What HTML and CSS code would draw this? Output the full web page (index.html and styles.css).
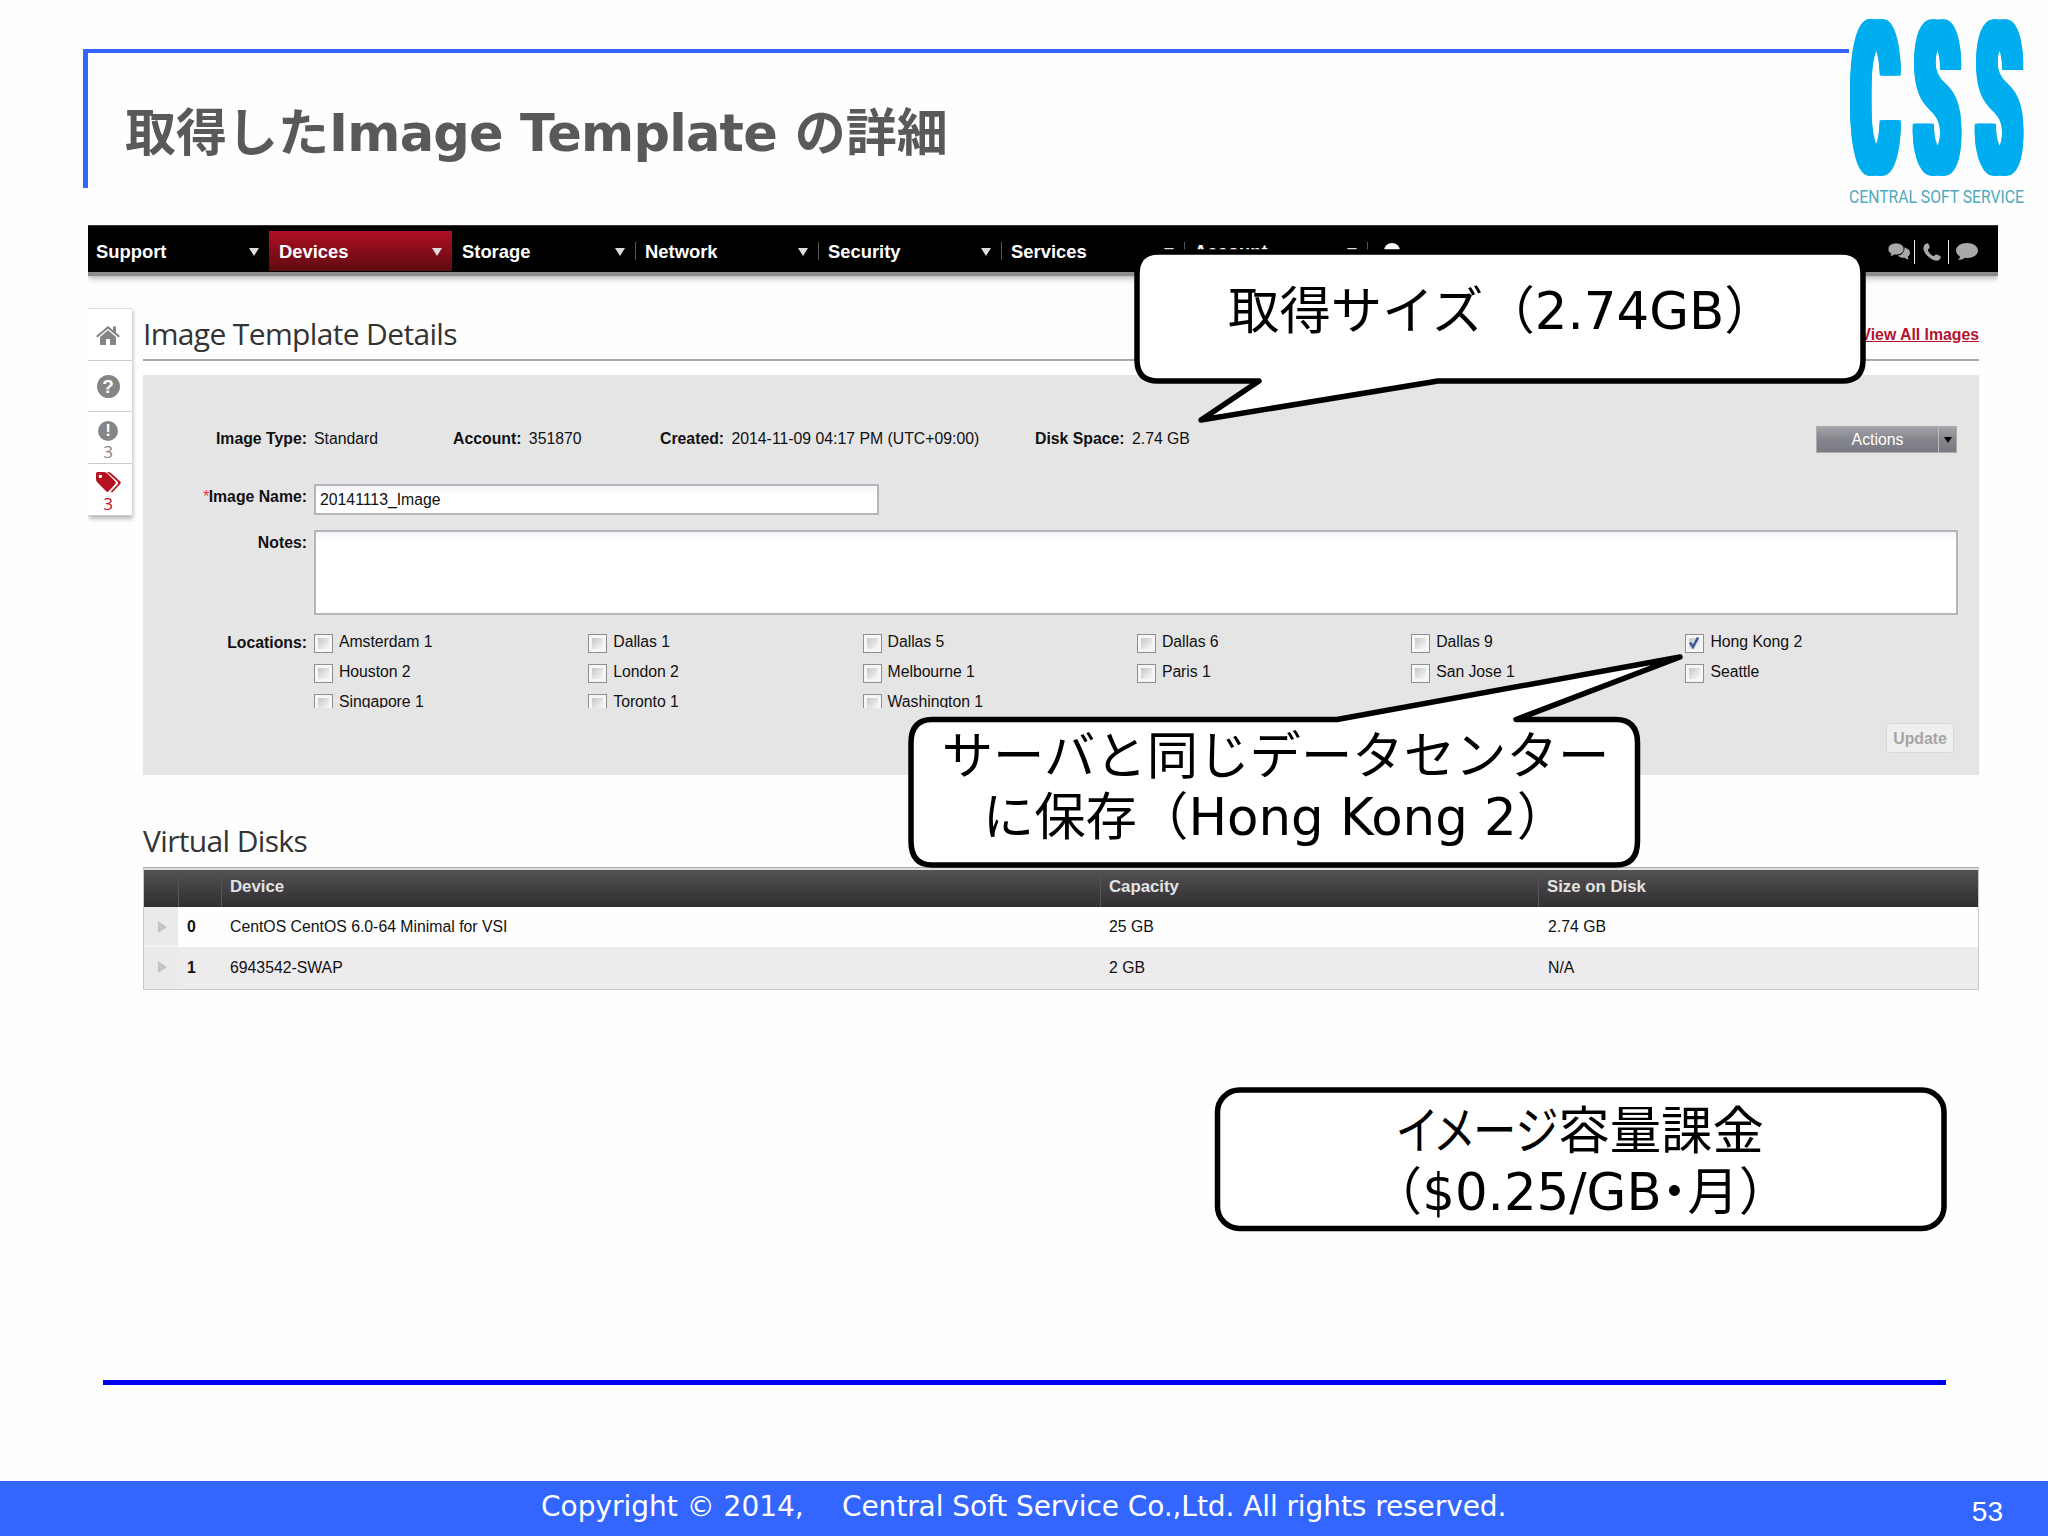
FILE: index.html
```html
<!DOCTYPE html>
<html lang="ja">
<head>
    <meta charset="UTF-8">
    <meta name="viewport" content="width=device-width, initial-scale=1.0">
    <title>取得したImage Template の詳細</title>
    <link rel="stylesheet" href="styles.css">
</head>
<body>
    <div class="slide">
        <header class="title-bar">
            <h1>取得した<span class="latin">Image Template</span> の詳細</h1>
        </header>

        <div class="logo">
            <div class="logo-letters"><span>C</span><span>S</span><span>S</span></div>
            <svg class="logo-caption" width="175" height="16" viewBox="0 0 175 16">
                <text x="0" y="14" textLength="175" lengthAdjust="spacingAndGlyphs">CENTRAL SOFT SERVICE</text>
            </svg>
        </div>

        <div class="console">
            <nav class="nav">
                <div class="nav-item first">Support<i class="arrow"></i></div>
                <div class="nav-item active">Devices<i class="arrow"></i></div>
                <div class="nav-item">Storage<i class="arrow"></i></div>
                <div class="nav-item sep">Network<i class="arrow"></i></div>
                <div class="nav-item sep">Security<i class="arrow"></i></div>
                <div class="nav-item sep">Services<i class="arrow"></i></div>
                <div class="nav-item sep">Account<i class="arrow"></i></div>
                <div class="nav-search sep">
                    <svg width="20" height="20" viewBox="0 0 20 20"><circle cx="9" cy="10" r="8" fill="#fff"/></svg>
                </div>
                <div class="nav-tools">
                    <svg width="22" height="20" viewBox="0 0 22 20" fill="#a9a9a9">
                        <path d="M15 5.500c4 0 7 2.300 7 5.300 0 1.800-1 3-2.300 4 .1 1.300.6 2 1.300 2.700-2 0-3.300-.7-4.300-1.700-3 .3-5.500-.5-6.700-2.300 4-.5 6.500-3 5-8z"/>
                        <path d="M8 1c4.400 0 8 2.500 8 6s-3.600 6-8 6c-.6 0-1.300 0-1.900-.2C5 14 3.500 14.500 1.600 14.500c.8-.7 1.200-1.500 1.300-2.700C1 10.700 0 9 0 7c0-3.500 3.600-6 8-6z" stroke="#000" stroke-width=".8"/>
                    </svg>
                    <svg class="phone" width="18" height="18" viewBox="0 0 18 18" fill="#a9a9a9">
                        <path d="M1.500 2C2.500.8 4 0 5 .4c1 .8 1.800 3 1.600 4.400C6.300 5.800 5 6 4.800 7c.7 2.500 3 5 5.500 6 1.200.2 1.700-1.200 2.700-1.500 1.500-.1 4 1.200 4.700 2.300.5 1-.6 2.600-2 3.400-2 1-5 .4-8-1.600C4 13 1.200 9.500.5 6.500.2 4.500.6 3 1.500 2z"/>
                    </svg>
                    <svg class="comment" width="22" height="20" viewBox="0 0 22 20" fill="#a9a9a9">
                        <path d="M11 1c6 0 11 3 11 7.500S17 16 11 16c-.8 0-1.500 0-2.200-.2C7 17.300 5 18 2 18c1.200-1 1.800-2 2-3.600C1.500 13 0 11 0 8.500 0 4 5 1 11 1z"/>
                    </svg>
                </div>
            </nav>

            <div class="content">
                <aside class="sidebar">
                    <div class="side-item">
                        <svg width="24" height="22" viewBox="0 0 24 22" fill="#858585">
                            <path d="M12 2L0 12l1.300 1.600L12 4.800l10.700 8.800L24 12l-4-3.400V2.500h-3v3.600z"/>
                            <path d="M12 6.300L4 13v8h6v-6h4v6h6v-8z"/>
                        </svg>
                    </div>
                    <div class="side-item"><span class="badge">?</span></div>
                    <div class="side-item stacked"><span class="badge small">!</span><span class="count">3</span></div>
                    <div class="side-item stacked red">
                        <svg width="25" height="21" viewBox="0 0 25 21" fill="#b5121f">
                            <path fill-rule="evenodd" d="M0 1.500Q0 0 1.500 0H8q2 0 3.500 1.500l7.800 8q1 1.200 0 2.400l-6.600 7.300q-1.200 1.200-2.500 0L1.500 10.500Q0 9 0 7zM4.300 2.700a1.700 1.700 0 1 0 .1 0z"/>
                            <path d="M11 0h1.500q1.500 0 3 1.500l8.700 8q1.200 1.200 0 2.400L17 19.700q-1.200 1-2.500.3l7-7.500q1.300-1.500 0-3z"/>
                        </svg>
                        <span class="count">3</span>
                    </div>
                </aside>

                <main class="main">
                    <div class="heading">
                        <h2>Image Template Details</h2>
                        <a class="view-all" href="#">View All Images</a>
                    </div>

                    <form class="panel">
                        <div class="info-row">
                            <b class="label">Image Type:</b>
                            <span>Standard</span>
                            <span><b>Account:</b> 351870</span>
                            <span><b>Created:</b> 2014-11-09 04:17 PM (UTC+09:00)</span>
                            <span><b>Disk Space:</b> 2.74 GB</span>
                            <div class="actions"><span class="actions-text">Actions</span><span class="actions-drop"></span></div>
                        </div>
                        <div class="row name-row">
                            <b class="label"><em>*</em>Image Name:</b>
                            <div class="field name-field">20141113_Image</div>
                        </div>
                        <div class="row notes-row">
                            <b class="label">Notes:</b>
                            <div class="field notes-field"></div>
                        </div>
                        <div class="row loc-row">
                            <b class="label">Locations:</b>
                            <div class="locations">
                                <label><i class="box"></i>Amsterdam 1</label>
                                <label><i class="box"></i>Dallas 1</label>
                                <label><i class="box"></i>Dallas 5</label>
                                <label><i class="box"></i>Dallas 6</label>
                                <label><i class="box"></i>Dallas 9</label>
                                <label><i class="box"><svg width="14" height="14" viewBox="0 0 14 14"><path d="M3 6.500l3 4.500 5-9.500" fill="none" stroke="#41599c" stroke-width="2.600"/></svg></i>Hong Kong 2</label>
                                <label><i class="box"></i>Houston 2</label>
                                <label><i class="box"></i>London 2</label>
                                <label><i class="box"></i>Melbourne 1</label>
                                <label><i class="box"></i>Paris 1</label>
                                <label><i class="box"></i>San Jose 1</label>
                                <label><i class="box"></i>Seattle</label>
                                <label><i class="box"></i>Singapore 1</label>
                                <label><i class="box"></i>Toronto 1</label>
                                <label><i class="box"></i>Washington 1</label>
                            </div>
                        </div>
                        <div class="update">Update</div>
                    </form>

                    <h2 class="disks-title">Virtual Disks</h2>
                    <div class="table">
                        <div class="tr th"><span></span><span></span><span>Device</span><span>Capacity</span><span>Size on Disk</span></div>
                        <div class="tr"><span class="expand"></span><b>0</b><span>CentOS CentOS 6.0-64 Minimal for VSI</span><span>25 GB</span><span>2.74 GB</span></div>
                        <div class="tr alt"><span class="expand"></span><b>1</b><span>6943542-SWAP</span><span>2 GB</span><span>N/A</span></div>
                    </div>
                </main>
            </div>
        </div>

        <div class="rule"></div>

        <footer class="footer">
            <span class="copy">Copyright © 2014,</span>
            <span class="company">Central Soft Service Co.,Ltd. All rights reserved.</span>
            <span class="page">53</span>
        </footer>

        <!-- speech balloons on top of the console -->
        <svg class="balloons" width="2048" height="1536" viewBox="0 0 2048 1536">
            <g fill="#fff" stroke="#000" stroke-width="5.500" stroke-linejoin="round">
                <path d="M1158 252H1842Q1863 252 1863 274V360Q1863 381 1842 381H1438L1201 420L1259 381H1158Q1137 381 1137 360V274Q1137 252 1158 252Z"/>
                <path d="M932 719.500H1337L1680 657L1516 719.500H1616Q1637.500 719.500 1637.500 743V841Q1637.500 865 1616 865H932Q911 865 911 841V743Q911 719.500 932 719.500Z"/>
                <rect x="1217.500" y="1090" width="726.500" height="138.500" rx="22"/>
            </g>
        </svg>
        <div class="balloon-text size-note">取得サイズ（2.74GB）</div>
        <div class="balloon-text place-note">サーバと同じデータセンター<br>に保存（Hong Kong 2）</div>
        <div class="balloon-text price-note"><span class="kana narrow">イメージ</span>容量課金<br><span class="paren">（</span>$0.25/GB<span class="kana">・</span>月<span class="paren">）</span></div>
    </div>
</body>
</html>
```
FILE: styles.css
```css
:root {
    --blue: #3366ff;
    --red: #b5121f;
    --ui: "Liberation Sans", Arial, sans-serif;
    --jp: "DejaVu Sans", "Noto Sans CJK JP", sans-serif;
}
* {
    box-sizing: border-box;
}
body {
    margin: 0;
    background: #fff;
}
h1, h2 {
    margin: 0;
}
.slide {
    position: relative;
    width: 2048px;
    height: 1536px;
    overflow: hidden;
    background: #fefefe;
    padding-top: 49px;
}
.title-bar {
    width: 1766px;
    height: 139px;
    margin-left: 83px;
    padding: 51px 0 0 37px;
    border-top: 4px solid var(--blue);
    border-left: 5px solid var(--blue);
}
.title-bar h1 {
    font: bold 51px/60px var(--jp);
    color: #595959;
    white-space: nowrap;
}
.title-bar .latin {
    letter-spacing: -.75px;
}

/* logo */
.logo {
    position: absolute;
    left: 1849px;
    top: 19px;
    width: 175px;
    height: 187px;
}
.logo-letters {
    display: flex;
    gap: 10px;
    width: 175px;
    height: 157px;
}
.logo-letters span {
    display: flex;
    flex: none;
    justify-content: center;
    width: 52px;
    font: 500 206px/163px Roboto, sans-serif;
    color: #00aeef;
    transform: scaleX(.325);
    text-shadow: 7px 3px, 14px 3px, 20px 3px, -7px 3px, -14px 3px, -20px 3px,
        7px -3px, 14px -3px, 20px -3px, -7px -3px, -14px -3px, -20px -3px,
        20px 0, -20px 0;
}
.logo-caption {
    display: block;
    margin-top: 13px;
    font: 400 18px Roboto, sans-serif;
    fill: #4fa9bd;
}

/* console */
.console {
    width: 1910px;
    margin: 37px 0 0 88px;
    font: 15.8px/20px var(--ui);
    color: #111;
}
.nav {
    display: flex;
    height: 47px;
    background: #000;
    border-top: 1px solid #333;
    box-shadow: 0 4px 0 #8c8c8c, 0 6px 6px #aaa;
    clip-path: inset(0 0 -20px 0);
    font-weight: bold;
    font-size: 18.4px;
    color: #fff;
}
.nav-item {
    display: flex;
    align-items: center;
    justify-content: space-between;
    width: 183px;
    height: 40px;
    margin-top: 5px;
    padding: 2px 10px 0 10px;
}
.nav-item.first {
    width: 181px;
    padding-left: 8px;
}
.nav-item.active {
    background: linear-gradient(#b01023, #5e0a10);
}
.sep {
    background: linear-gradient(#555, #555) 0 50% / 1px 18px no-repeat;
}
.arrow {
    border: 5px solid transparent;
    border-top: 8px solid #ddd;
    border-bottom: 0;
}
.nav-search {
    width: 40px;
    height: 40px;
    margin-top: 5px;
    padding: 10px 0 0 16px;
}
.nav-tools {
    display: flex;
    align-items: center;
    margin: 6px 20px 0 auto;
    height: 40px;
}
.nav-tools .phone {
    box-sizing: content-box;
    padding: 3px 7px 3px 8px;
    margin: 0 7px 0 4px;
    border-left: 1px solid #eee;
    border-right: 1px solid #eee;
}
.content {
    display: flex;
    gap: 11px;
    padding-top: 36px;
}
.sidebar {
    width: 44px;
    height: 208px;
    border-top: 1px solid #ddd;
    box-shadow: 1px 3px 4px #bbb;
    clip-path: inset(-2px -6px -8px 0);
    background: #fff;
}
.side-item {
    display: flex;
    align-items: center;
    justify-content: center;
    height: 51.7px;
    padding: 1px 4px 0 0;
    border-bottom: 1px solid #ccc;
    color: #858585;
}
.side-item.stacked {
    flex-direction: column;
    padding-top: 8px;
}
.side-item.red {
    color: var(--red);
}
.badge {
    width: 23px;
    height: 23px;
    border-radius: 50%;
    background: #858585;
    color: #fff;
    text-align: center;
    font: bold 19px/23px var(--ui);
}
.badge.small {
    width: 20px;
    height: 20px;
    line-height: 20px;
    font-size: 17px;
}
.count {
    font: 17px/21px "Open Sans", sans-serif;
}
.main {
    width: 1836px;
}
.heading {
    display: flex;
    justify-content: space-between;
    height: 53px;
    border-bottom: 2px solid #aaabb0;
}
.main h2 {
    font: 400 30px/52px "Open Sans", sans-serif;
    letter-spacing: -.65px;
    color: #333;
}
.view-all {
    font: bold 15.8px/53px var(--ui);
    color: #b5122b;
}
.panel {
    height: 400px;
    margin-top: 14px;
    padding-top: 51px;
    background: #e6e5e6;
}
.label {
    text-align: right;
}
.label em {
    color: #e33;
    font-weight: normal;
}
.info-row {
    display: grid;
    grid-template-columns: 164px 132px 200px 368px 1fr 141px;
    column-gap: 7px;
    height: 27px;
    padding-right: 22px;
    line-height: 25px;
    white-space: nowrap;
}
.info-row b {
    margin-right: 3px;
}
.info-row .label {
    margin-right: 0;
}
.actions {
    display: flex;
    height: 27px;
    border: 1px solid #aaa;
    background: linear-gradient(#a3a4a8, #85868c 50%, #797a82);
    color: #fff;
    text-align: center;
}
.actions-text {
    flex: 1;
    line-height: 26px;
}
.actions-drop {
    display: flex;
    align-items: center;
    justify-content: center;
    width: 18px;
    border-left: 1px solid #bbb;
}
.actions-drop::before {
    content: "";
    border: 4px solid transparent;
    border-top: 6px solid #000;
    border-bottom: 0;
}
.row {
    display: grid;
    grid-template-columns: 164px 1fr;
    column-gap: 7px;
    padding-right: 21px;
    line-height: 25px;
}
.field {
    border: 2px solid #b5b5bb;
    background: linear-gradient(#f4f4f8, #fff 10px);
}
.name-row {
    margin-top: 31px;
}
.name-field {
    width: 565px;
    height: 31px;
    padding-left: 4px;
    line-height: 28px;
}
.notes-row {
    margin-top: 15px;
}
.notes-field {
    height: 85px;
}
.loc-row {
    margin-top: 19px;
    line-height: 17px;
}
.locations {
    display: grid;
    grid-template-columns: repeat(6, 274.3px);
    grid-auto-rows: 29.8px;
    height: 74px;
    overflow: hidden;
}
.locations label {
    display: flex;
    gap: 6px;
    line-height: 15px;
    letter-spacing: -.05px;
}
.box {
    width: 19px;
    height: 19px;
    border: 1px solid #8e8f8f;
    background: linear-gradient(135deg, #c4c6c8, #fafafa) 50% / 11px 11px no-repeat #f6f6f6;
}
.box svg {
    display: block;
    margin: 1px;
}
.update {
    width: 68px;
    height: 30px;
    margin: 15px 25px 0 auto;
    border: 1px solid #d8d8d8;
    border-radius: 3px;
    background: #f0eff0;
    font-weight: bold;
    line-height: 29px;
    text-align: center;
    color: #a5a5a5;
}
.main .disks-title {
    height: 52px;
    margin-top: 40px;
}
.table {
    height: 123px;
    border: 1px solid #c8c8c8;
    border-top: 1px solid #aaa;
}
.tr {
    display: grid;
    grid-template-columns: 34px 52px 879px 439px 1fr;
    height: 40px;
    line-height: 40px;
}
.tr.th {
    grid-template-columns: 34px 43px 879px 438px 1fr;
    height: 39px;
    border-top: 2px solid #ddd;
    background: linear-gradient(#545255, #2f2d30);
    color: #e3e3e3;
    font-weight: bold;
    font-size: 16.8px;
    line-height: 33px;
}
.tr.th span:nth-child(n+2) {
    background: linear-gradient(#555, #555) 0 100% / 1px 30px no-repeat;
}
.tr.th span:nth-child(n+3) {
    padding-left: 9px;
}
.tr b {
    padding-left: 9px;
}
.tr.alt {
    height: 42px;
    line-height: 42px;
    background: #edebee;
}
.expand {
    display: flex;
    align-items: center;
    height: 40px;
    padding-left: 14px;
    background: #ebeaeb;
    border-bottom: 1px solid #f6f6f6;
}
.alt .expand {
    border-bottom: 0;
}
.expand::before {
    content: "";
    border: 6px solid transparent;
    border-left: 9px solid #c4c4c4;
    border-right: 0;
}

.rule {
    width: 1843px;
    height: 5px;
    margin: 390px 0 0 103px;
    background: #0000f0;
}
.footer {
    display: flex;
    height: 56px;
    margin-top: 96px;
    padding: 0 45px 0 541px;
    background: var(--blue);
    color: #fff;
    font: 28px/51px var(--jp);
    white-space: nowrap;
}
.copy {
    width: 301px;
}
.company {
    letter-spacing: -.08px;
}
.page {
    margin-left: auto;
    font: 28px/62px var(--ui);
}

/* balloons */
.balloons {
    position: absolute;
    left: 0;
    top: 0;
}
.balloon-text {
    position: absolute;
    font: 51.400px/61px var(--jp);
    color: #000;
    text-align: center;
    white-space: nowrap;
}
.size-note {
    left: 1228px;
    top: 281px;
}
.place-note {
    left: 912px;
    top: 726px;
    width: 727px;
}
.price-note {
    left: 1217px;
    top: 1101px;
    width: 727px;
}
.kana {
    font-feature-settings: "palt";
}
.kana.narrow {
    display: inline-block;
    margin-right: -29px;
    transform: scaleX(.845);
    transform-origin: 0 50%;
}
.paren {
    font-feature-settings: "halt";
}
```
